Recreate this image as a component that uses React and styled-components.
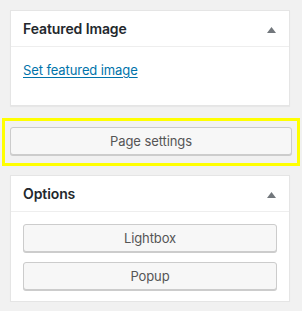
import React from 'react';
import styled, { createGlobalStyle } from 'styled-components';

const GlobalStyle = createGlobalStyle`
	body {
		margin: 0;
		background: #f1f1f1;
		font-family: Inter, "Noto Sans", "Liberation Sans", sans-serif;
		color: #444;
	}
`;

const Sidebar = styled.div`
	display: flex;
	flex-direction: column;
	width: 302px;
	padding-top: 10px;
`;

const Panel = styled.div`
	margin: 0 12px 0 10px;
	background: #fff;
	border: 1px solid #e5e5e5;
	box-shadow: 0 1px 1px rgba(0, 0, 0, 0.04);
`;

const PanelHeader = styled.div`
	display: flex;
	align-items: center;
	justify-content: space-between;
	height: 35px;
	padding: 0 13px 0 12px;
	border-bottom: 1px solid #eee;
`;

const PanelTitle = styled.h2`
	margin: 0;
	font-size: 14px;
	font-weight: 600;
	color: #23282d;
	letter-spacing: -0.1px;
`;

const Toggle = styled.svg`
	width: 9px;
	height: 6px;
	margin-top: 3px;
	fill: #72777c;
`;

const PanelBody = styled.div`
	display: flex;
	flex-direction: column;
	gap: ${props => props.gap || 0}px;
	padding: ${props => props.pad};
`;

const Link = styled.a`
	font-size: 13px;
	line-height: 20px;
	color: #0073aa;
	text-decoration: underline;
	text-underline-offset: 2px;
	letter-spacing: -0.1px;
	cursor: pointer;
`;

const Highlight = styled.div`
	margin: 12px 2px 9px;
	padding: 6px 5px 8px;
	border: 3px solid #ffff00;
`;

const Button = styled.button`
	display: block;
	width: 100%;
	height: 28px;
	padding: 0 10px;
	background: #f7f7f7;
	border: 1px solid #ccc;
	border-radius: 3px;
	box-shadow: 0 1px 0 #ccc;
	font-family: inherit;
	font-size: 13px;
	color: #555;
	letter-spacing: -0.1px;
	cursor: pointer;
`;

const Arrow = () => (
	<Toggle viewBox="0 0 9 6">
		<polygon points="4.5,0 9,6 0,6" />
	</Toggle>
);

const App = () => (
	<>
		<GlobalStyle />
		<Sidebar>
			<Panel>
				<PanelHeader>
					<PanelTitle>Featured Image</PanelTitle>
					<Arrow />
				</PanelHeader>
				<PanelBody pad="12px 12px 25px">
					<div><Link>Set featured image</Link></div>
				</PanelBody>
			</Panel>

			<Highlight>
				<Button>Page settings</Button>
			</Highlight>

			<Panel>
				<PanelHeader>
					<PanelTitle>Options</PanelTitle>
					<Arrow />
				</PanelHeader>
				<PanelBody pad="12px 12px 11px" gap={10}>
					<Button>Lightbox</Button>
					<Button>Popup</Button>
				</PanelBody>
			</Panel>
		</Sidebar>
	</>
);

export default App;
